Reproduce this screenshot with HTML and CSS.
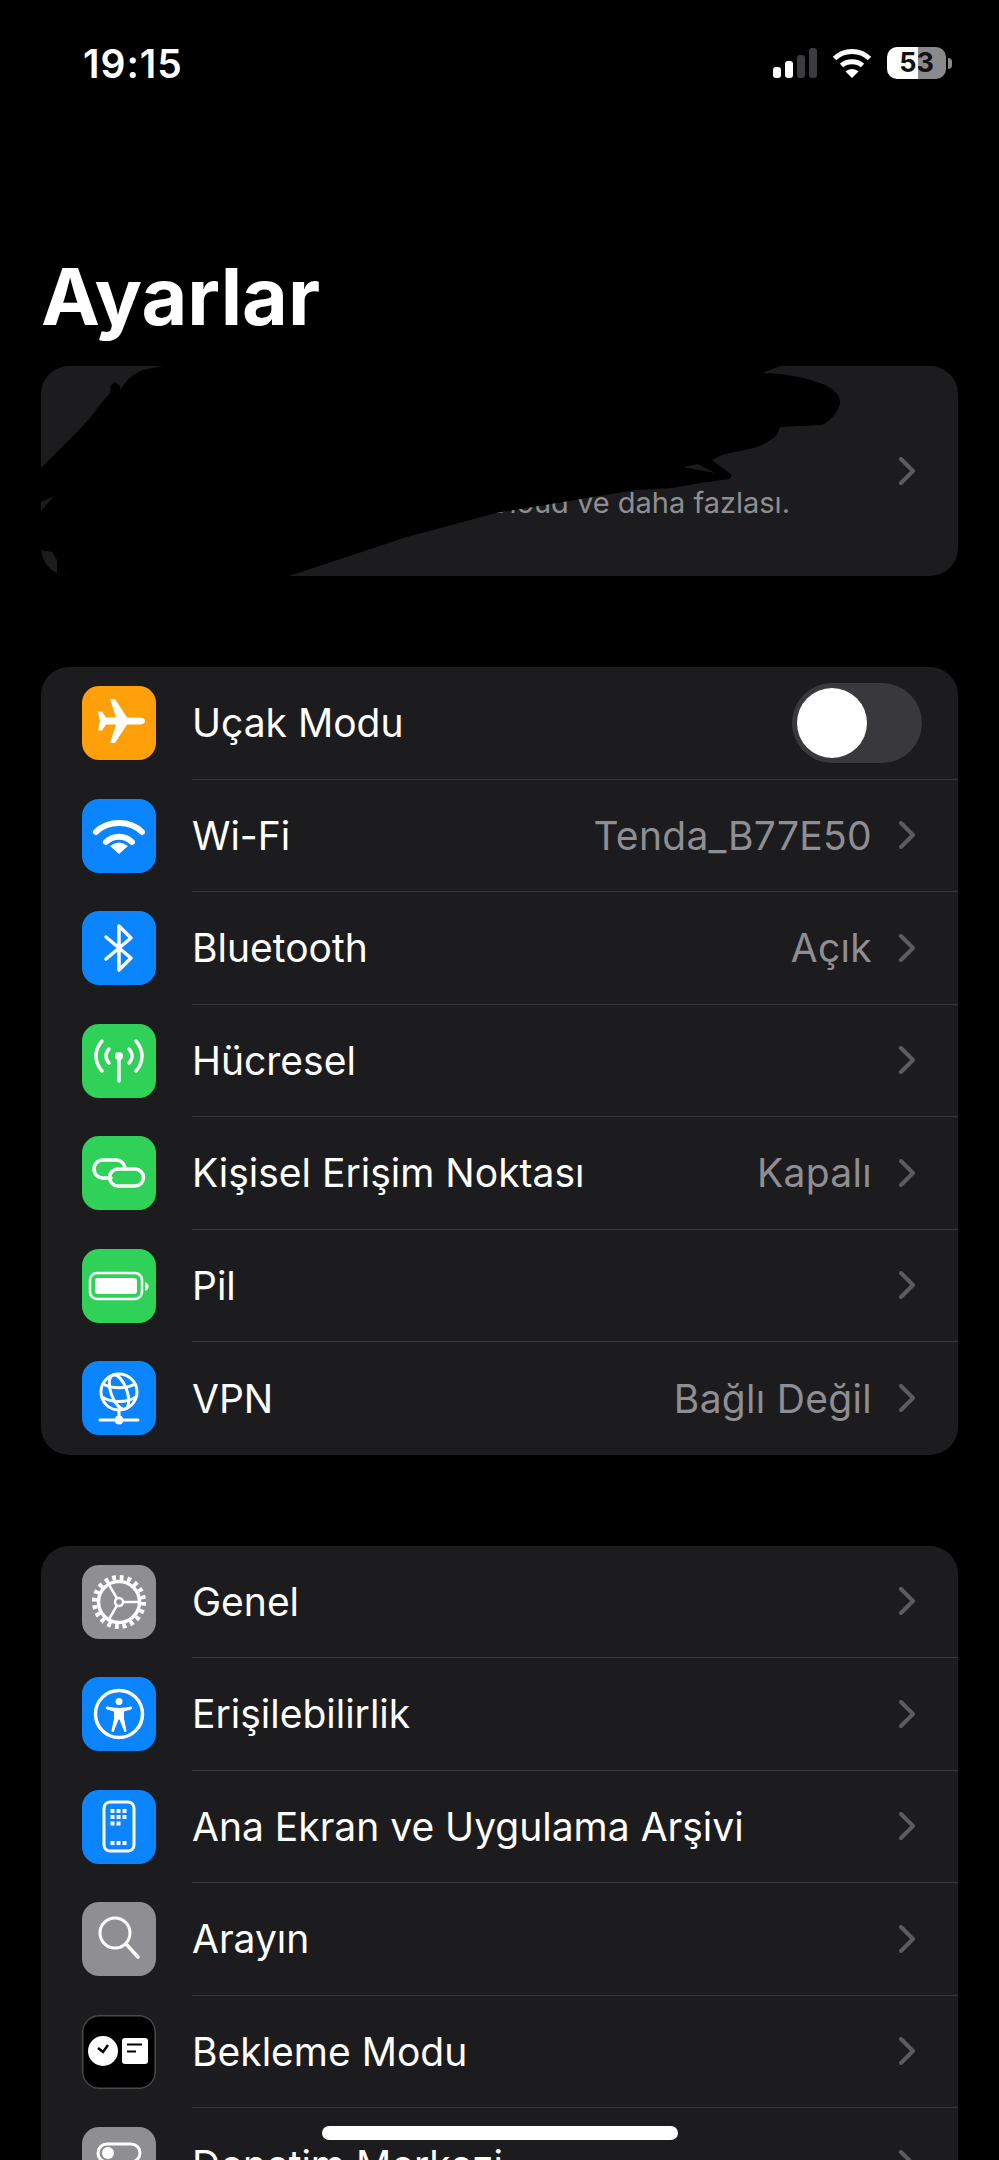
FILE: index.html
```html
<!DOCTYPE html>
<html lang="tr">
<head>
  <meta charset="UTF-8">
  <title>Ayarlar</title>
  <link rel="stylesheet" href="styles.css">
</head>
<body>

  <!-- Status bar -->
  <div class="status">
    <span class="time">19:15</span>
    <div class="status-icons">
      <svg class="signal" width="44" height="30" viewBox="0 0 44 30">
        <rect x="0" y="19" width="8" height="11" rx="3" fill="#fff"/>
        <rect x="12" y="13" width="8" height="17" rx="3" fill="#fff"/>
        <rect x="24" y="7" width="8" height="23" rx="3" fill="#3c3c3e"/>
        <rect x="36" y="0" width="8" height="30" rx="3" fill="#3c3c3e"/>
      </svg>
      <svg class="wifi" width="40" height="30" viewBox="0 0 40 30" fill="none" stroke="#fff" stroke-width="5">
        <path d="M2.500 10.500C12 1 28 1 37.500 10.500"/>
        <path d="M9.500 17.500C15 12.500 25 12.500 30.500 17.500"/>
        <path d="M20 30l-6.500-6.500C17 20 23 20 26.500 23.500z" fill="#fff" stroke="none"/>
      </svg>
      <div class="battery">
        <div class="battery-body"><span>53</span></div>
        <div class="battery-nub"></div>
      </div>
    </div>
  </div>

  <h1 class="title">Ayarlar</h1>

  <!-- Account card, name scribbled out on the screenshot -->
  <div class="card account">
    <p class="account-sub">Apple Hesabı, iCloud ve daha fazlası.</p>
    <svg class="chev" viewBox="0 0 18 28"><path d="M3 2l12 12L3 26"/></svg>
    <svg class="scribble" width="917" height="210" viewBox="0 0 917 210">
      <path fill-rule="evenodd" d="M122 0H739L721 7C735 7 760 10 776 16 790 20 799 28 799 36 799 43 790 55 781 59L739 61 736 69C728 76 722 79 712 82L681 89 671 94 691 109 689 113 659 117 632 122 595 124 455 147 366 171 248 210H16V194L11 186 0 184V145L13 130 0 136V102L36 66 49 52 61 36 69 27 70 19 74 16 79 20 79 24 84 17C90 10 96 6 102 4zM642 101L657 98 674 107z"/>
    </svg>
  </div>

  <div class="card">
    <div class="row">
      <div class="icon orange">
        <svg viewBox="0 0 74 74"><path fill="#fff" d="M63 35c0 2.500-3 3.500-6 3.500H45L33 57h-5l6-18.500H24l-4 6h-4l2-9.500-2-9.500h4l4 6h10L28 13h5l12 18.500h12c3 0 6 1 6 3.500z"/></svg>
      </div>
      <div class="row-main">
        <span class="label">Uçak Modu</span>
        <div class="toggle"><div class="knob"></div></div>
      </div>
    </div>
    <div class="row">
      <div class="icon blue">
        <svg viewBox="0 0 74 74" fill="none" stroke="#fff" stroke-width="6" stroke-linecap="round"><path d="M14 33C26 21 48 21 60 33"/><path d="M24 43C31 36 43 36 50 43"/><path d="M37 55L28 47Q37 40 46 47z" fill="#fff" stroke="none"/></svg>
      </div>
      <div class="row-main">
        <span class="label">Wi-Fi</span>
        <span class="value">Tenda_B77E50</span>
        <svg class="chev" viewBox="0 0 18 28"><path d="M3 2l12 12L3 26"/></svg>
      </div>
    </div>
    <div class="row">
      <div class="icon blue">
        <svg viewBox="0 0 74 74" fill="none" stroke="#fff" stroke-width="3.500" stroke-linecap="round" stroke-linejoin="round"><path d="M24 26L49 47 37 59V15L49 27 24 48"/></svg>
      </div>
      <div class="row-main">
        <span class="label">Bluetooth</span>
        <span class="value">Açık</span>
        <svg class="chev" viewBox="0 0 18 28"><path d="M3 2l12 12L3 26"/></svg>
      </div>
    </div>
    <div class="row">
      <div class="icon green">
        <svg viewBox="0 0 74 74" fill="none" stroke="#fff" stroke-width="3.500" stroke-linecap="round"><path d="M20 17C12 26 12 38 20 47"/><path d="M27 25C23 29 23 35 27 39"/><path d="M54 17C62 26 62 38 54 47"/><path d="M47 25C51 29 51 35 47 39"/><path d="M37 32V57"/><circle cx="37" cy="32" r="4" fill="#fff" stroke="none"/></svg>
      </div>
      <div class="row-main">
        <span class="label">Hücresel</span>
        <svg class="chev" viewBox="0 0 18 28"><path d="M3 2l12 12L3 26"/></svg>
      </div>
    </div>
    <div class="row">
      <div class="icon green">
        <svg viewBox="0 0 74 74" fill="none" stroke="#fff" stroke-width="3.500" stroke-linecap="round"><path d="M29 42H21a9 9 0 0 1 0-18H34a9 9 0 0 1 9 9"/><rect x="27.500" y="33" width="34" height="17" rx="8.500"/></svg>
      </div>
      <div class="row-main">
        <span class="label">Kişisel Erişim Noktası</span>
        <span class="value">Kapalı</span>
        <svg class="chev" viewBox="0 0 18 28"><path d="M3 2l12 12L3 26"/></svg>
      </div>
    </div>
    <div class="row">
      <div class="icon green">
        <svg viewBox="0 0 74 74"><rect x="8" y="24" width="52" height="26" rx="7" fill="none" stroke="#fff" stroke-width="2.500"/><rect x="13" y="29" width="42" height="16" rx="3" fill="#fff"/><path d="M63 33c2 1 3.500 2.500 3.500 4.500S65 41 63 42z" fill="#fff"/></svg>
      </div>
      <div class="row-main">
        <span class="label">Pil</span>
        <svg class="chev" viewBox="0 0 18 28"><path d="M3 2l12 12L3 26"/></svg>
      </div>
    </div>
    <div class="row">
      <div class="icon blue">
        <svg viewBox="0 0 74 74" fill="none" stroke="#fff" stroke-width="3" stroke-linecap="round"><circle cx="37" cy="31" r="18"/><ellipse cx="37" cy="31" rx="8" ry="18" transform="rotate(-20 37 31)"/><path d="M21 23C30 28 44 28 53 23"/><path d="M20 36C30 42 44 42 54 36"/><path d="M37 49V58"/><path d="M18 59H56"/><circle cx="37" cy="59" r="4.500" fill="#fff" stroke="none"/></svg>
      </div>
      <div class="row-main">
        <span class="label">VPN</span>
        <span class="value">Bağlı Değil</span>
        <svg class="chev" viewBox="0 0 18 28"><path d="M3 2l12 12L3 26"/></svg>
      </div>
    </div>
  </div>

  <div class="card last">
    <div class="row">
      <div class="icon gray">
        <svg viewBox="0 0 74 74" fill="none" stroke="#fff"><circle cx="37" cy="37" r="20.500" stroke-width="3.500"/><circle cx="37" cy="37" r="24.500" stroke-width="5" stroke-dasharray="3.850 3.850"/><circle cx="37" cy="37" r="4" stroke-width="2.500"/><path d="M41 37H58M35 33.500L26.500 19M35 40.500L26.500 55" stroke-width="2.500"/></svg>
      </div>
      <div class="row-main">
        <span class="label">Genel</span>
        <svg class="chev" viewBox="0 0 18 28"><path d="M3 2l12 12L3 26"/></svg>
      </div>
    </div>
    <div class="row">
      <div class="icon blue">
        <svg viewBox="0 0 74 74"><circle cx="37" cy="37" r="23.500" fill="none" stroke="#fff" stroke-width="3.500"/><circle cx="37" cy="24.500" r="3.500" fill="#fff"/><path fill="#fff" d="M25 29.500c4 .5 8 1.500 12 1.500s8-1 12-1.500c1.500 0 1.500 2.500 0 3l-7 2v7l2.500 12c.3 1.500-2 2-2.500.5l-4.500-11.500h-1l-4.500 11.500c-.5 1.500-2.800 1-2.500-.5l2.500-12v-7l-7-2c-1.500-.5-1.500-3 0-3z"/></svg>
      </div>
      <div class="row-main">
        <span class="label">Erişilebilirlik</span>
        <svg class="chev" viewBox="0 0 18 28"><path d="M3 2l12 12L3 26"/></svg>
      </div>
    </div>
    <div class="row">
      <div class="icon blue">
        <svg viewBox="0 0 74 74" fill="#fff"><rect x="22" y="12" width="30" height="49" rx="6" fill="none" stroke="#fff" stroke-width="3"/><rect x="28.500" y="19" width="4" height="4"/><rect x="34.500" y="19" width="4" height="4"/><rect x="40.500" y="19" width="4" height="4"/><rect x="28.500" y="25" width="4" height="4"/><rect x="34.500" y="25" width="4" height="4"/><rect x="40.500" y="25" width="4" height="4"/><rect x="28.500" y="31.500" width="4" height="4"/><rect x="34.500" y="31.500" width="4" height="4"/><rect x="28.500" y="51" width="4" height="4"/><rect x="34.500" y="51" width="4" height="4"/><rect x="40.500" y="51" width="4" height="4"/></svg>
      </div>
      <div class="row-main">
        <span class="label">Ana Ekran ve Uygulama Arşivi</span>
        <svg class="chev" viewBox="0 0 18 28"><path d="M3 2l12 12L3 26"/></svg>
      </div>
    </div>
    <div class="row">
      <div class="icon gray">
        <svg viewBox="0 0 74 74" fill="none" stroke="#fff" stroke-width="3" stroke-linecap="round"><circle cx="33" cy="31" r="15"/><path d="M44 42L56 55" stroke-width="3.500"/></svg>
      </div>
      <div class="row-main">
        <span class="label">Arayın</span>
        <svg class="chev" viewBox="0 0 18 28"><path d="M3 2l12 12L3 26"/></svg>
      </div>
    </div>
    <div class="row">
      <div class="icon standby">
        <svg viewBox="0 0 74 74"><circle cx="21" cy="36" r="15" fill="#fff"/><path d="M16 33l5 4 5-7" fill="none" stroke="#000" stroke-width="2.500"/><rect x="40" y="23" width="26" height="26" rx="3" fill="#fff"/><path d="M45 29.500H60M45 36.500H54" stroke="#000" stroke-width="2"/></svg>
      </div>
      <div class="row-main">
        <span class="label">Bekleme Modu</span>
        <svg class="chev" viewBox="0 0 18 28"><path d="M3 2l12 12L3 26"/></svg>
      </div>
    </div>
    <div class="row">
      <div class="icon gray">
        <svg viewBox="0 0 74 74"><rect x="16" y="17" width="42" height="18" rx="9" fill="none" stroke="#fff" stroke-width="3"/><circle cx="26" cy="26" r="6" fill="#fff"/><rect x="16" y="41" width="42" height="18" rx="9" fill="#fff"/></svg>
      </div>
      <div class="row-main">
        <span class="label">Denetim Merkezi</span>
        <svg class="chev" viewBox="0 0 18 28"><path d="M3 2l12 12L3 26"/></svg>
      </div>
    </div>
  </div>

  <div class="home-bar"></div>

</body>
</html>
```

FILE: styles.css
```css
* {
  box-sizing: border-box;
}

body {
  margin: 0;
  height: 2160px;
  overflow: hidden;
  background-color: #000;
  color: #fff;
  font-family: 'Inter', 'Liberation Sans', sans-serif;
  position: relative;
}

/* status bar */
.status {
  display: flex;
  justify-content: space-between;
  padding: 44px 47px 0 83px;
  height: 248px;
}

.time {
  font-size: 39px;
  font-weight: 600;
  line-height: 40px;
  letter-spacing: 1px;
}

.status-icons {
  display: flex;
  align-items: flex-start;
  gap: 15px;
  padding-top: 4px;
}

.battery {
  display: flex;
  align-items: center;
  gap: 2px;
  margin-top: -1px;
}

.battery-body {
  width: 59px;
  height: 32px;
  border-radius: 10px;
  background: linear-gradient(to right, #fff 53%, #8a8a8c 53%);
  color: #111;
  font-size: 27px;
  font-weight: 700;
  line-height: 32px;
  text-align: center;
}

.battery-nub {
  width: 4px;
  height: 11px;
  border-radius: 0 4px 4px 0;
  background-color: #8a8a8c;
}

.title {
  margin: 0 0 0 41px;
  height: 118px;
  font-size: 79px;
  font-weight: 700;
  line-height: 96px;
}

/* grouped cards */
.card {
  margin: 0 41px 91px;
  border-radius: 28px;
  background-color: #1c1c1e;
  overflow: hidden;
}

.account {
  height: 210px;
  display: flex;
  align-items: center;
  justify-content: flex-end;
  padding-right: 42px;
  position: relative;
}

.account-sub {
  position: absolute;
  right: 168px;
  top: 119px;
  margin: 0;
  font-size: 29px;
  line-height: 36px;
  color: #8e8e93;
}

.scribble {
  position: absolute;
  left: 0;
  top: 0;
}

.row {
  display: flex;
  align-items: stretch;
  height: 112.5px;
  padding-left: 41px;
}

.icon {
  flex: none;
  width: 74px;
  height: 74px;
  margin-top: 19px;
  border-radius: 17px;
}

.icon svg {
  display: block;
  width: 74px;
  height: 74px;
}

.orange { background-color: #ff9f0a; }
.blue { background-color: #0a84ff; }
.green { background-color: #30d158; }
.gray { background-color: #8e8e93; }

.standby {
  background-color: #000;
  box-shadow: inset 0 0 0 1.5px #4a4a4c;
}

.row-main {
  flex: 1;
  display: flex;
  align-items: center;
  margin-left: 36px;
  padding-right: 42px;
  border-bottom: 1.5px solid #38383a;
}

.row:last-child .row-main {
  border-bottom: none;
}

.label {
  flex: 1;
  font-size: 39px;
}

.value {
  font-size: 39px;
  letter-spacing: 0.3px;
  color: #8e8e93;
  margin-right: 26px;
}

.chev {
  flex: none;
  width: 18px;
  height: 28px;
  fill: none;
  stroke: #5c5c60;
  stroke-width: 4;
  stroke-linecap: round;
  stroke-linejoin: round;
}

.toggle {
  width: 130px;
  height: 80px;
  margin-right: -6px;
  border-radius: 40px;
  background-color: #39393d;
  padding: 5px;
}

.knob {
  width: 70px;
  height: 70px;
  border-radius: 50%;
  background-color: #fff;
}

.home-bar {
  position: absolute;
  left: 322px;
  top: 2126px;
  width: 356px;
  height: 14px;
  border-radius: 7px;
  background-color: #fff;
}
```
